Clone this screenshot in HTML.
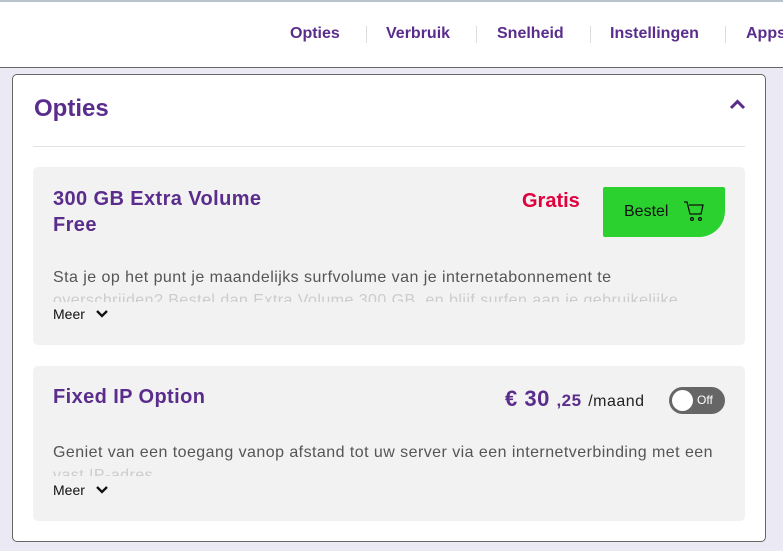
<!DOCTYPE html>
<html><head><style>
*{box-sizing:border-box;margin:0;padding:0}
body{width:783px;height:551px;overflow:hidden;background:#ebe9f3;font-family:"Liberation Sans",sans-serif;position:relative}
.hdr{position:absolute;left:0;top:0;width:783px;height:68px;background:#fff;border-top:2px solid #b9c3cc;border-bottom:1px solid #666}
.nav{position:absolute;top:23px;font-size:16px;font-weight:bold;color:#5a2d8c}
.sep{position:absolute;top:24px;width:1px;height:17px;background:#ddd}
.card{position:absolute;left:12px;top:74px;width:754px;height:468px;background:#fff;border:1px solid #666;border-radius:5px}
.t{position:absolute;color:#5a2d8c;font-weight:bold}
.panel{position:absolute;left:33px;width:712px;background:#f2f2f2;border-radius:5px}
.desc{position:absolute;left:20px;font-size:16px;letter-spacing:0.45px;color:#555;line-height:23px;width:680px;height:36px;overflow:hidden;white-space:nowrap}
.desc span{color:#ccc}
.meer{position:absolute;left:20px;font-size:14px;color:#111}
</style></head><body>
<div class="hdr">
<div class="nav" style="left:290px">Opties</div><div class="sep" style="left:366px"></div>
<div class="nav" style="left:386px">Verbruik</div><div class="sep" style="left:476px"></div>
<div class="nav" style="left:497px">Snelheid</div><div class="sep" style="left:590px"></div>
<div class="nav" style="left:610px">Instellingen</div><div class="sep" style="left:725px"></div>
<div class="nav" style="left:746px">Apps</div>
</div>
<div class="card"></div>
<div class="t" style="left:34px;top:95px;font-size:24px">Opties</div>
<svg style="position:absolute;left:729px;top:99px" width="17" height="11"><path d="M2 9 L8.5 2.5 L15 9" stroke="#5a2d8c" stroke-width="3" fill="none"/></svg>
<div style="position:absolute;left:33px;top:146px;width:712px;height:1px;background:#e3e3e3"></div>

<div class="panel" style="top:167px;height:178px">
<div class="t" style="left:20px;top:19px;font-size:20px;letter-spacing:0.4px;line-height:26px">300 GB Extra Volume<br>Free</div>
<div style="position:absolute;left:489px;top:23px;font-size:20px;font-weight:bold;color:#e0003c">Gratis</div>
<div style="position:absolute;left:570px;top:20px;width:122px;height:50px;background:#2bd12f;border-radius:2px 2px 26px 2px">
<div style="position:absolute;left:21px;top:16px;font-size:16px;color:#111">Bestel</div>
<svg style="position:absolute;left:80px;top:13px" width="24" height="24" fill="none" stroke="#111" stroke-width="1.3"><path d="M1 2h3l3 12h11l2-9H6"/><circle cx="9" cy="19" r="1.4"/><circle cx="17" cy="19" r="1.4"/></svg>
</div>
<div class="desc" style="top:99px">Sta je op het punt je maandelijks surfvolume van je internetabonnement te<br><span>overschrijden? Bestel dan Extra Volume 300 GB, en blijf surfen aan je gebruikelijke</span></div>
<div class="meer" style="top:139px">Meer <svg width="14" height="10" style="margin-left:6px"><path d="M2 2l5 5 5-5" stroke="#111" stroke-width="2.3" fill="none"/></svg></div>
</div>

<div class="panel" style="top:366px;height:155px">
<div class="t" style="left:20px;top:20px;font-size:20px;letter-spacing:0.4px">Fixed IP Option</div>
<div style="position:absolute;left:472px;top:20px;color:#5a2d8c;font-weight:bold;font-size:22px;letter-spacing:0.5px">€ 30 <span style="font-size:17px">,25</span> <span style="font-size:16px;font-weight:normal;color:#222">/maand</span></div>
<div style="position:absolute;left:636px;top:21px;width:56px;height:27px;background:#666;border-radius:14px">
<div style="position:absolute;left:3px;top:3px;width:21px;height:21px;background:#fff;border-radius:50%"></div>
<div style="position:absolute;left:28px;top:6px;font-size:12px;color:#fff">Off</div></div>
<div class="desc" style="top:75px;height:35px">Geniet van een toegang vanop afstand tot uw server via een internetverbinding met een<br><span>vast IP-adres</span></div>
<div class="meer" style="top:116px">Meer <svg width="14" height="10" style="margin-left:6px"><path d="M2 2l5 5 5-5" stroke="#111" stroke-width="2.3" fill="none"/></svg></div>
</div>
</body></html>
